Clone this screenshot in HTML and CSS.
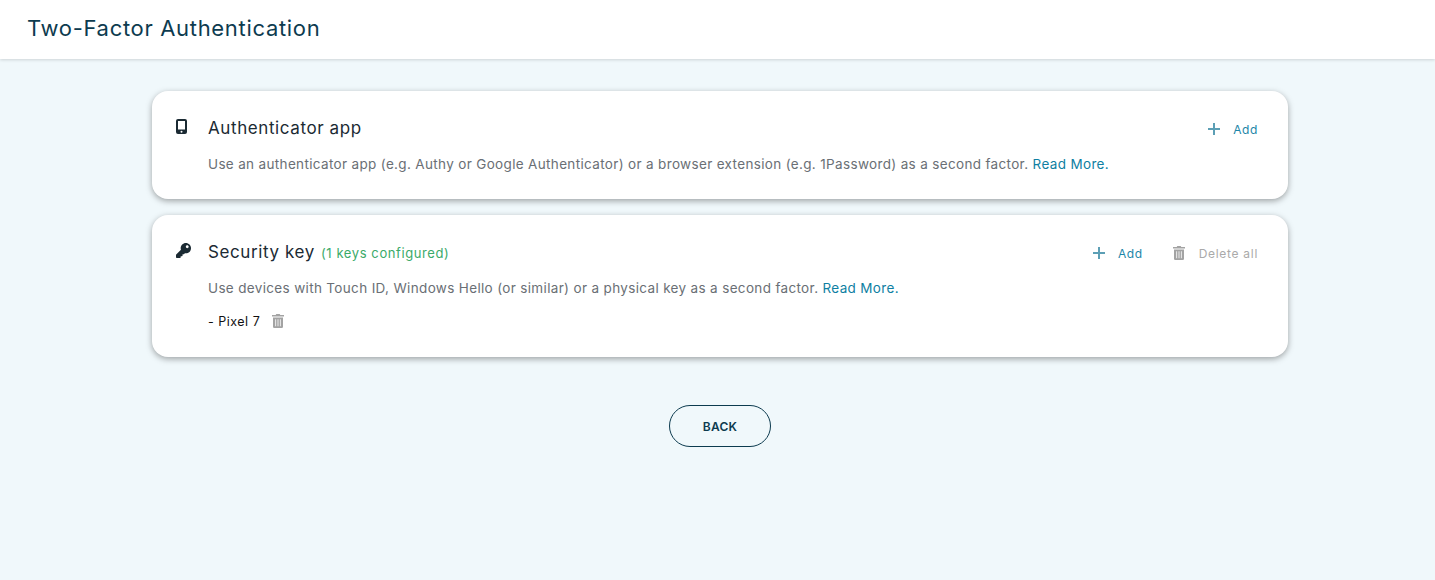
FILE: index.html
```html
<!DOCTYPE html>
<html lang="en">
<head>
	<meta charset="UTF-8">
	<title>Two-Factor Authentication</title>
	<link rel="stylesheet" href="styles.css">
</head>
<body>
	<header class="topbar">
		<h1>Two-Factor Authentication</h1>
	</header>
	<main class="content">
		<section class="card">
			<div class="card-icon">
				<svg class="phone" viewBox="0 0 11 15"><path fill-rule="evenodd" d="M2 0h7a2 2 0 0 1 2 2v11a2 2 0 0 1-2 2H2a2 2 0 0 1-2-2V2a2 2 0 0 1 2-2zm0 2v8.500h7V2zm3.500 9.700a1 1 0 1 0 0 2 1 1 0 0 0 0-2z"/></svg>
			</div>
			<div class="card-body">
				<div class="card-head">
					<h2>Authenticator app</h2>
					<div class="actions">
						<a class="action" href="#"><svg class="plus" viewBox="0 0 12 12"><path d="M6 0v12M0 6h12"/></svg>Add</a>
					</div>
				</div>
				<p class="desc">Use an authenticator app (e.g. Authy or Google Authenticator) or a browser extension (e.g. 1Password) as a second factor. <a href="#">Read More.</a></p>
			</div>
		</section>
		<section class="card">
			<div class="card-icon">
				<svg class="key" viewBox="0 0 512 512"><path fill-rule="evenodd" d="M512 176c0 97.200-78.800 176-176 176-11.200 0-22.200-1.100-32.800-3.100l-24 27A24 24 0 0 1 261.200 384H224v40c0 13.300-10.700 24-24 24h-40v40c0 13.300-10.700 24-24 24H24c-13.300 0-24-10.700-24-24v-78.100c0-6.400 2.500-12.500 7-17l161.800-161.800C163.100 213.800 160 195.300 160 176 160 78.800 238.800 0 336 0c97.500 0 176 78.500 176 176zM336 128c0 26.500 21.500 48 48 48s48-21.500 48-48-21.500-48-48-48-48 21.500-48 48z"/></svg>
			</div>
			<div class="card-body">
				<div class="card-head">
					<h2>Security key<span class="status">(1 keys configured)</span></h2>
					<div class="actions">
						<a class="action" href="#"><svg class="plus" viewBox="0 0 12 12"><path d="M6 0v12M0 6h12"/></svg>Add</a>
						<a class="action muted" href="#"><svg class="trash" viewBox="0 0 12 14"><path fill-rule="evenodd" d="M4.300 0h3.400l.6 1H12v1.500H0V1h3.700zM1 3.500h10v9.300A1.200 1.200 0 0 1 9.800 14H2.200A1.200 1.200 0 0 1 1 12.800zm2.300 1.700v7h.8v-7zm2.300 0v7h.8v-7zm2.300 0v7h.8v-7z"/></svg>Delete all</a>
					</div>
				</div>
				<p class="desc">Use devices with Touch ID, Windows Hello (or similar) or a physical key as a second factor. <a href="#">Read More.</a></p>
				<div class="device">- Pixel 7 <svg class="trash" viewBox="0 0 12 14"><path fill-rule="evenodd" d="M4.300 0h3.400l.6 1H12v1.500H0V1h3.700zM1 3.500h10v9.300A1.200 1.200 0 0 1 9.800 14H2.200A1.200 1.200 0 0 1 1 12.800zm2.300 1.700v7h.8v-7zm2.300 0v7h.8v-7zm2.300 0v7h.8v-7z"/></svg></div>
			</div>
		</section>
		<div class="footer">
			<button class="back">BACK</button>
		</div>
	</main>
</body>
</html>
```

FILE: styles.css
```css
*{
	box-sizing: border-box;
}
body{
	margin: 0;
	height: 580px;
	overflow: hidden;
	background: #f0f8fb;
	font-family: Inter, "Liberation Sans", sans-serif;
	color: #1b2a33;
}
h1,h2,p{
	margin: 0;
	font-weight: 400;
}
a{
	text-decoration: none;
}
.topbar{
	height: 59px;
	padding: 0 28px 3px 27px;
	display: flex;
	align-items: center;
	background: #fff;
	box-shadow: 0 1px 3px rgba(0,0,0,.15);
}
.topbar h1{
	font-size: 22px;
	letter-spacing: .68px;
	color: #0d3b4f;
}
.content{
	padding: 32px 147px 0 152px;
}
.card{
	display: flex;
	margin-bottom: 16px;
	padding: 24px 30px 25px 24px;
	background: #fff;
	border-radius: 16px;
	box-shadow: 0 2px 6px rgba(0,0,0,.35);
}
.card-icon{
	width: 32px;
	padding-top: 4px;
	flex: none;
}
.phone{
	display: block;
	width: 11px;
	height: 15px;
	fill: #1b2a33;
}
.key{
	display: block;
	width: 15px;
	height: 15px;
	fill: #1b2a33;
}
.card-body{
	flex: 1;
}
.card-head{
	display: flex;
	justify-content: space-between;
	align-items: center;
	height: 26px;
}
.card-head h2{
	font-size: 17px;
	letter-spacing: .6px;
}
.status{
	margin-left: 6px;
	font-size: 13px;
	letter-spacing: .6px;
	color: #3aaa6a;
}
.actions{
	display: flex;
	gap: 30px;
	margin-top: 2px;
}
.action{
	display: flex;
	align-items: center;
	font-size: 12px;
	letter-spacing: .6px;
	color: #1c86a8;
}
.action.muted{
	letter-spacing: .7px;
	color: #aaa;
}
.plus{
	width: 12px;
	height: 12px;
	margin-right: 13px;
	fill: none;
	stroke: #5c9fb5;
	stroke-width: 2;
}
.trash{
	width: 12px;
	height: 14px;
	fill: #a3a3a3;
}
.action .trash{
	margin-right: 14px;
}
.desc{
	margin-top: 13px;
	font-size: 13.500px;
	letter-spacing: .34px;
	line-height: 20px;
	color: #6a6f75;
}
.desc a{
	color: #0f7fa3;
}
.device{
	display: flex;
	align-items: center;
	gap: 12px;
	height: 18px;
	margin: 14px 0 2px;
	font-size: 12.500px;
	letter-spacing: .5px;
	color: #111;
}
.footer{
	display: flex;
	justify-content: center;
	padding-top: 32px;
}
.back{
	width: 102px;
	height: 42px;
	border: 1px solid #0d3b4f;
	border-radius: 21px;
	background: transparent;
	font-family: inherit;
	font-size: 12px;
	font-weight: 600;
	letter-spacing: .3px;
	color: #0d3b4f;
}
```
